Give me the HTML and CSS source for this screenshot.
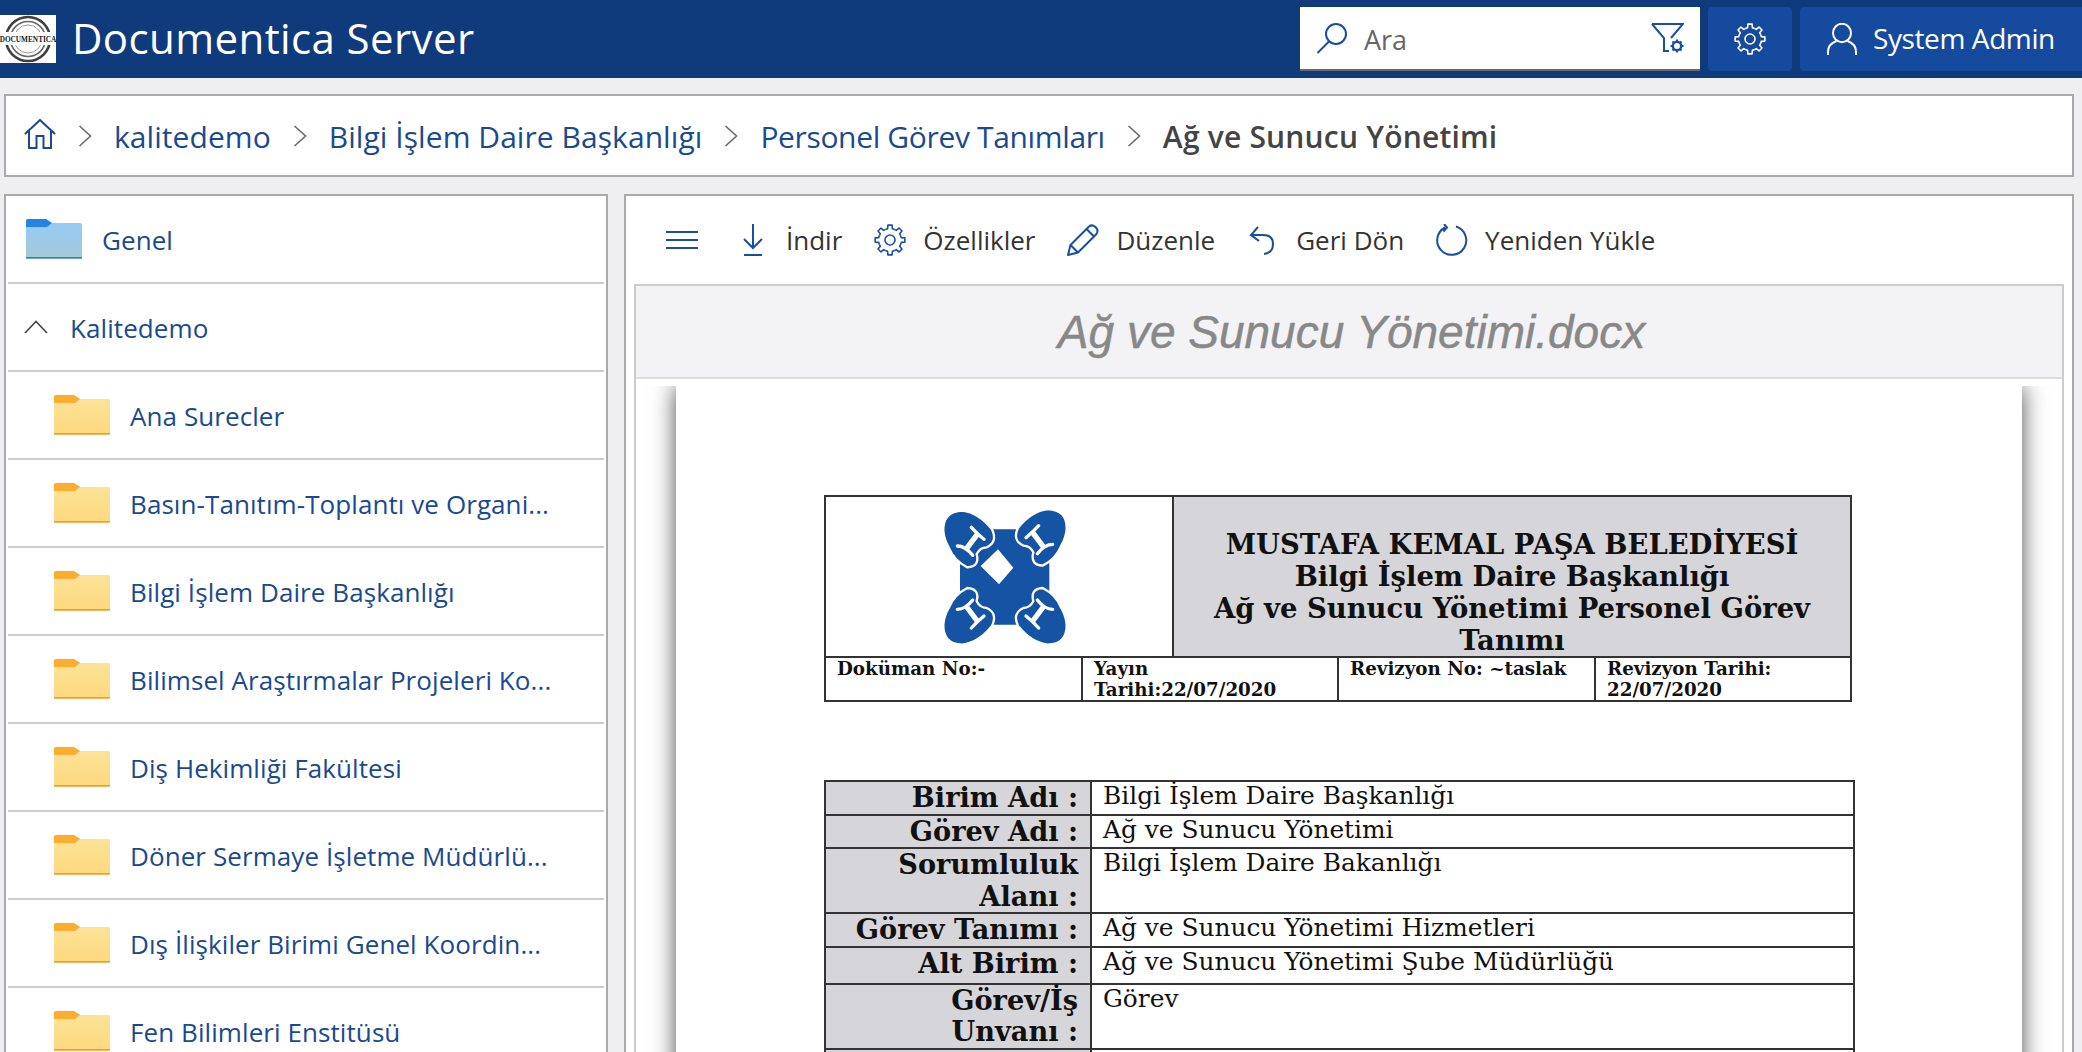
FILE: index.html
```html
<!DOCTYPE html>
<html lang="tr">
<head>
<meta charset="utf-8">
<title>Documentica Server</title>
<link rel="stylesheet" href="styles.css">
</head>
<body>
<svg class="defs" aria-hidden="true">
  <defs>
    <linearGradient id="gradY" x1="0" y1="0" x2="0" y2="1"><stop offset="0" stop-color="#fde39a"/><stop offset="1" stop-color="#fdd97e"/></linearGradient>
    <linearGradient id="gradB" x1="0" y1="0" x2="0" y2="1"><stop offset="0" stop-color="#94cbfa"/><stop offset="1" stop-color="#a5c8d6"/></linearGradient>
    <g id="tooth"><path d="M-4.4-10.62 L-2.39-11.25 L-2.09-14.85 H2.09 L2.39-11.25 L4.4-10.62"/></g>
    <symbol id="gear" viewBox="0 0 32 32">
      <g transform="translate(16 16)" fill="none" stroke="currentColor" stroke-width="1.6" stroke-linejoin="round">
        <use href="#tooth"/><use href="#tooth" transform="rotate(45)"/><use href="#tooth" transform="rotate(90)"/><use href="#tooth" transform="rotate(135)"/><use href="#tooth" transform="rotate(180)"/><use href="#tooth" transform="rotate(225)"/><use href="#tooth" transform="rotate(270)"/><use href="#tooth" transform="rotate(315)"/>
        <circle r="5"/>
      </g>
    </symbol>
    <symbol id="chev" viewBox="0 0 14 24"><path d="M1.5 2 L12.5 12 L1.5 22" fill="none" stroke="#6a6a6a" stroke-width="1.6"/></symbol>
    <symbol id="fy" viewBox="0 0 56 40">
      <path d="M0 2 Q0 0 2 0 H20 L26 4 H54 Q56 4 56 6 V38 Q56 40 54 40 H2 Q0 40 0 38 Z" fill="url(#gradY)"/>
      <path d="M0 8 V2 Q0 0 2 0 H20 L26 4 L21 8 Z" fill="#fdac2f"/>
      <path d="M0 38.8 H56" stroke="#ea9a3e" stroke-width="1.6"/>
    </symbol>
    <symbol id="fb" viewBox="0 0 56 40">
      <path d="M0 2 Q0 0 2 0 H20 L26 4 H54 Q56 4 56 6 V38 Q56 40 54 40 H2 Q0 40 0 38 Z" fill="url(#gradB)"/>
      <path d="M0 8 V2 Q0 0 2 0 H20 L26 4 L21 8 Z" fill="#2484e4"/>
      <path d="M0 38.8 H56" stroke="#2a7fd2" stroke-width="1.6"/>
    </symbol>
    <g id="corner">
      <path d="M68 105 Q66 46 125 44 Q174 50 214 100 Q232 138 198 154 Q178 154 168 174 Q178 212 140 214 Q100 194 84 154 Q70 130 68 105 Z" fill="#1553a5" stroke="#ffffff" stroke-width="7"/>
      <path d="M110 150 Q134 150 156 178 M152 94 Q168 112 190 130" fill="none" stroke="#ffffff" stroke-width="10" stroke-linecap="round"/>
      <path d="M136 160 L172 112" fill="none" stroke="#ffffff" stroke-width="16"/>
    </g>
  </defs>
</svg>

<header class="topbar">
  <svg class="brand-logo" viewBox="0 0 56 48">
    <rect width="56" height="48" fill="#fff"/>
    <circle cx="28" cy="24" r="22" fill="none" stroke="#3f3f3f" stroke-width="2.6"/>
    <circle cx="28" cy="24" r="17.5" fill="none" stroke="#666" stroke-width="1.6"/>
    <circle cx="28" cy="24" r="14" fill="none" stroke="#999" stroke-width="1"/>
    <rect x="0" y="17" width="56" height="13" fill="#fff"/>
    <text class="brand-logo-text" x="28" y="27">DOCUMENTICA</text>
  </svg>
  <div class="brand-name">Documentica Server</div>
  <div class="search">
    <svg class="ic-search" viewBox="0 0 32 32"><circle cx="20" cy="12" r="10" fill="none" stroke="currentColor" stroke-width="2"/><path d="M13 19.5 L1.5 31" fill="none" stroke="currentColor" stroke-width="2"/></svg>
    <span class="search-text">Ara</span>
    <svg class="ic-filter" viewBox="0 0 33 30">
      <path d="M1 1 H32 L20 15 M1 1 L13 15 V28 H18" fill="none" stroke="currentColor" stroke-width="2"/>
      <circle cx="26" cy="23" r="4.2" fill="none" stroke="currentColor" stroke-width="2.4"/>
      <path d="M26 16.5 V19 M26 27 V29.5 M19.5 23 H22 M30 23 H32.5 M21.5 18.5 L23.2 20.2 M28.8 25.8 L30.5 27.5 M30.5 18.5 L28.8 20.2 M23.2 25.8 L21.5 27.5" stroke="currentColor" stroke-width="2"/>
    </svg>
  </div>
  <div class="top-btn top-settings"><svg class="ic32"><use href="#gear"/></svg></div>
  <div class="top-btn top-user">
    <svg class="ic-user" viewBox="0 0 30 32"><ellipse cx="15" cy="10" rx="9" ry="9.2" fill="none" stroke="currentColor" stroke-width="2"/><path d="M1 32 V29 Q1 21 9.5 18 M29 32 V29 Q29 21 20.5 18" fill="none" stroke="currentColor" stroke-width="2"/></svg>
    <span class="user-name">System Admin</span>
  </div>
</header>

<nav class="crumbs">
  <svg class="ic-home" viewBox="0 0 32 30"><path d="M1 15 L16 1 L31 15 M5 12 V29 H12.5 V17 H19.5 V29 H27 V12" fill="none" stroke="currentColor" stroke-width="2"/></svg>
  <svg class="chev"><use href="#chev"/></svg>
  <a class="crumb">kalitedemo</a>
  <svg class="chev"><use href="#chev"/></svg>
  <a class="crumb">Bilgi İşlem Daire Başkanlığı</a>
  <svg class="chev"><use href="#chev"/></svg>
  <a class="crumb crumb-tight">Personel Görev Tanımları</a>
  <svg class="chev"><use href="#chev"/></svg>
  <span class="crumb crumb-current">Ağ ve Sunucu Yönetimi</span>
</nav>

<main class="main">
  <aside class="tree">
    <div class="row row-root"><svg class="folder"><use href="#fb"/></svg><span class="row-text">Genel</span></div>
    <div class="row row-group"><svg class="ic-up" viewBox="0 0 24 14"><path d="M1 13 L12 1.5 L23 13" fill="none" stroke="#444" stroke-width="1.6"/></svg><span class="row-text">Kalitedemo</span></div>
    <div class="row row-child"><svg class="folder"><use href="#fy"/></svg><span class="row-text">Ana Surecler</span></div>
    <div class="row row-child"><svg class="folder"><use href="#fy"/></svg><span class="row-text">Basın-Tanıtım-Toplantı ve Organi...</span></div>
    <div class="row row-child"><svg class="folder"><use href="#fy"/></svg><span class="row-text">Bilgi İşlem Daire Başkanlığı</span></div>
    <div class="row row-child"><svg class="folder"><use href="#fy"/></svg><span class="row-text">Bilimsel Araştırmalar Projeleri Ko...</span></div>
    <div class="row row-child"><svg class="folder"><use href="#fy"/></svg><span class="row-text">Diş Hekimliği Fakültesi</span></div>
    <div class="row row-child"><svg class="folder"><use href="#fy"/></svg><span class="row-text">Döner Sermaye İşletme Müdürlü...</span></div>
    <div class="row row-child"><svg class="folder"><use href="#fy"/></svg><span class="row-text">Dış İlişkiler Birimi Genel Koordin...</span></div>
    <div class="row row-child"><svg class="folder"><use href="#fy"/></svg><span class="row-text">Fen Bilimleri Enstitüsü</span></div>
  </aside>

  <section class="viewer">
    <div class="toolbar">
      <svg class="ic-menu" viewBox="0 0 32 18"><path d="M0 1 H32 M0 9 H32 M0 17 H32" stroke="currentColor" stroke-width="2"/></svg>
      <div class="tool"><svg class="ic32" viewBox="0 0 32 32"><path d="M16 0 V24 M7 15 L16 24 L25 15 M7 31 H25" fill="none" stroke="currentColor" stroke-width="2"/></svg><span>İndir</span></div>
      <div class="tool"><svg class="ic32"><use href="#gear"/></svg><span>Özellikler</span></div>
      <div class="tool"><svg class="ic32" viewBox="0 0 32 32"><path d="M1 31 L3.5 21 L22 2.5 Q25 0 28.5 3 Q32 6.5 29.5 10 L11 28.5 Z M3.5 21 L11 28.5 M19.5 5 L27 12.5" fill="none" stroke="currentColor" stroke-width="2" stroke-linejoin="round"/></svg><span>Düzenle</span></div>
      <div class="tool"><svg class="ic32" viewBox="0 0 32 32"><path d="M11 3 L4 11 L12 17 M4 11 H16 Q26 11 26 20 Q26 29 17 30" fill="none" stroke="currentColor" stroke-width="2"/></svg><span>Geri Dön</span></div>
      <div class="tool"><svg class="ic32" viewBox="0 0 32 32"><path d="M20 2.5 A14.5 14.5 0 1 1 9 3.5 M8 0 L11 3.5 L7.5 7.5" fill="none" stroke="currentColor" stroke-width="2"/></svg><span>Yeniden Yükle</span></div>
    </div>
    <div class="frame">
      <h1 class="doc-title">Ağ ve Sunucu Yönetimi.docx</h1>
      <div class="page-clip">
        <article class="page">
          <table class="doc-head">
            <colgroup><col class="c257"><col class="c91"><col class="c165"><col class="c257"><col class="c256"></colgroup>
            <tr class="dh-top">
              <td colspan="2" class="dh-logo">
                <svg class="muni-logo" viewBox="4 9 468 468">
                  <rect x="118" y="100" width="268" height="286" rx="90" fill="#1553a5"/>
                  <use href="#corner"/>
                  <use href="#corner" transform="matrix(-1 0 0 1 506 -5)"/>
                  <use href="#corner" transform="matrix(1 0 0 -1 0 490)"/>
                  <use href="#corner" transform="matrix(-1 0 0 -1 506 490)"/>
                  <polygon points="232,160 278,215 235,265 180,210" fill="#fff"/>
                </svg>
              </td>
              <td colspan="3" class="dh-title">MUSTAFA KEMAL PAŞA BELEDİYESİ<br>Bilgi İşlem Daire Başkanlığı<br>Ağ ve Sunucu Yönetimi Personel Görev<br>Tanımı</td>
            </tr>
            <tr class="dh-meta">
              <td>Doküman No:-</td>
              <td colspan="2">Yayın<br>Tarihi:22/07/2020</td>
              <td>Revizyon No: ~taslak</td>
              <td>Revizyon Tarihi:<br>22/07/2020</td>
            </tr>
          </table>
          <table class="doc-info">
            <tr class="h33"><th>Birim Adı :</th><td>Bilgi İşlem Daire Başkanlığı</td></tr>
            <tr class="h33"><th>Görev Adı :</th><td>Ağ ve Sunucu Yönetimi</td></tr>
            <tr class="h65"><th>Sorumluluk<br>Alanı :</th><td>Bilgi İşlem Daire Bakanlığı</td></tr>
            <tr class="h33"><th>Görev Tanımı :</th><td>Ağ ve Sunucu Yönetimi Hizmetleri</td></tr>
            <tr class="h37"><th>Alt Birim :</th><td>Ağ ve Sunucu Yönetimi Şube Müdürlüğü</td></tr>
            <tr class="h65"><th>Görev/İş<br>Unvanı :</th><td>Görev</td></tr>
            <tr class="h65"><th></th><td></td></tr>
          </table>
        </article>
      </div>
    </div>
  </section>
</main>
</body>
</html>
```
FILE: styles.css
```css
* { box-sizing: border-box; }
html, body { margin: 0; height: 100%; }
body {
  height: 1052px;
  overflow: hidden;
  display: flex;
  flex-direction: column;
  background: #efeef1;
  font-family: "Open Sans", "Noto Sans", sans-serif;
  color: #1a4a8e;
}
.defs { width: 0; height: 0; flex: none; }

/* top bar */
.topbar {
  flex: none;
  height: 78px;
  background: #0f3a7c;
  display: flex;
  align-items: center;
  color: #fff;
}
.brand-logo { width: 56px; height: 48px; flex: none; }
.brand-logo-text {
  font-family: "Liberation Serif", serif;
  font-weight: 700;
  font-size: 7.3px;
  text-anchor: middle;
  fill: #222;
}
.brand-name {
  margin-left: 16px;
  font-size: 42px;
  font-weight: 500;
  letter-spacing: 0.4px;
  line-height: 76px;
  height: 78px;
}
.search {
  margin-left: auto;
  width: 400px;
  height: 64px;
  background: #fff;
  border-bottom: 2px solid #6a6a6a;
  display: flex;
  align-items: center;
  padding: 0 16px;
  color: #1a4f9f;
}
.ic-search { width: 32px; height: 32px; flex: none; }
.search-text { margin-left: 16px; padding-top: 2px; font-size: 27px; color: #666; flex: 1; }
.ic-filter { width: 33px; height: 30px; flex: none; }
.top-btn {
  height: 64px;
  margin-left: 8px;
  background: #164a9e;
  border-radius: 4px 0 0 4px;
  display: flex;
  align-items: center;
  color: #fff;
}
.top-settings { width: 84px; justify-content: center; border-radius: 4px; }
.top-user { width: 282px; padding-left: 27px; font-size: 28px; font-weight: 500; letter-spacing: -0.4px; }
.user-name { padding-bottom: 2px; }
.ic-user { width: 30px; height: 32px; margin-right: 16px; flex: none; }
.ic32 { width: 32px; height: 32px; flex: none; }

/* breadcrumb */
.crumbs {
  flex: none;
  height: 83px;
  margin: 16px 8px 0 4px;
  background: #fff;
  border: 2px solid #aaa9ab;
  display: flex;
  align-items: center;
  padding-left: 18px;
  gap: 22px;
}
.ic-home { width: 32px; height: 30px; flex: none; margin-top: -4px; }
.chev { width: 14px; height: 24px; flex: none; }
.crumb { font-size: 30px; letter-spacing: 0.06px; white-space: nowrap; padding-top: 1px; }
.crumb-tight { letter-spacing: -0.35px; }
.crumb-current { color: #444; font-weight: 600; letter-spacing: 0.2px; }

/* main area */
.main {
  flex: 1;
  min-height: 0;
  margin: 17px 8px 0 4px;
  display: grid;
  grid-template-columns: 604px 1fr;
  gap: 16px;
  overflow: hidden;
}
.tree, .viewer {
  background: #fff;
  border: 2px solid #aaa9ab;
  border-bottom: 0;
  min-height: 0;
  overflow: hidden;
}
.tree { padding: 0 2px; }
.row {
  height: 88px;
  display: flex;
  align-items: center;
  border-bottom: 2px solid #ccc;
  font-size: 26px;
  letter-spacing: 0.08px;
}
.row-root { padding-left: 18px; }
.row-group { padding-left: 16px; }
.row-child { padding-left: 46px; }
.folder { width: 56px; height: 40px; flex: none; margin-right: 20px; }
.ic-up { width: 24px; height: 14px; flex: none; margin-right: 22px; }
.row-text { white-space: nowrap; padding-top: 2px; }

/* viewer */
.viewer { display: flex; flex-direction: column; }
.toolbar {
  flex: none;
  height: 88px;
  display: flex;
  align-items: center;
  padding-left: 40px;
  gap: 32px;
  color: #1a4f9f;
}
.ic-menu { width: 32px; height: 18px; margin-right: 7px; flex: none; }
.tool { display: flex; align-items: center; gap: 17px; }
.tool span { color: #333; font-size: 26px; letter-spacing: 0; }
.frame {
  flex: 1;
  min-height: 0;
  margin: 0 8px;
  border: 2px solid #ccc;
  border-bottom: 0;
  display: flex;
  flex-direction: column;
  overflow: hidden;
}
.doc-title {
  flex: none;
  height: 93px;
  margin: 0 0 7px;
  padding-left: 5px;
  background: #f3f2f5;
  border-bottom: 2px solid #ddd;
  font: italic 400 46px/93px "Liberation Sans", sans-serif;
  -webkit-text-stroke: 0.5px #888;
  color: #888;
  text-align: center;
}
.page-clip { flex: 1; min-height: 0; overflow: hidden; padding: 0 40px; }
.page {
  width: 1346px;
  height: 1000px;
  background: #fff;
  box-shadow: 0 0 22px rgba(0, 0, 0, .7);
  padding: 109px 0 0 148px;
  font-family: "DejaVu Serif", serif;
  color: #111;
}
table { border-collapse: collapse; table-layout: fixed; }
td, th { padding: 0; }
.c257 { width: 257px; }
.c256 { width: 256px; }
.c91 { width: 91px; }
.c165 { width: 165px; }
.doc-head { width: 1026px; }
.doc-head td { border: 2px solid #333; }
.dh-top { height: 161px; }
.dh-logo { text-align: left; padding: 0; }
.muni-logo { display: block; width: 156px; height: 156px; margin: 1px 0 0 96px; filter: blur(0.6px); }
.dh-title {
  background: #d6d5d9;
  text-align: center;
  vertical-align: bottom;
  font-weight: 700;
  font-size: 27.43px;
  line-height: 32px;
}
.dh-meta { height: 43px; }
.dh-meta td {
  vertical-align: top;
  padding-left: 11px;
  font-weight: 700;
  font-size: 18.27px;
  line-height: 21px;
}
.doc-info { width: 1031px; margin-top: 78px; }
.doc-info th, .doc-info td { border: 2px solid #333; vertical-align: top; }
.doc-info th {
  width: 266px;
  background: #d6d5d9;
  text-align: right;
  padding-right: 12px;
  font-size: 27.2px;
  line-height: 31.5px;
}
.doc-info td { padding-left: 11px; font-size: 24.85px; line-height: 28px; font-weight: 400; }
.h33 { height: 33px; }
.h37 { height: 37px; }
.h65 { height: 65px; }
```
